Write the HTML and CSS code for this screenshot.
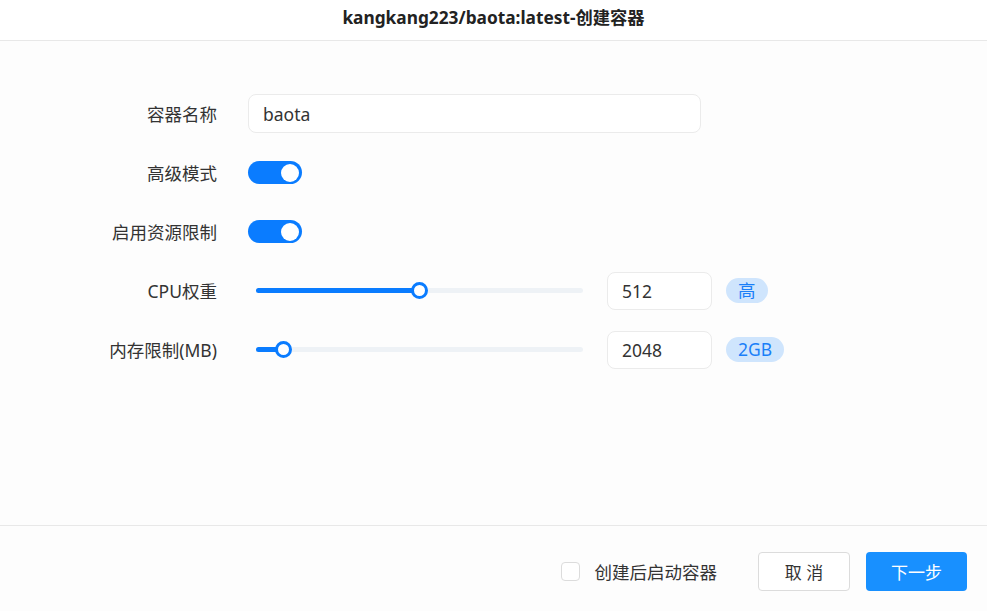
FILE: index.html
```html
<!DOCTYPE html>
<html lang="zh-CN">
<head>
    <meta charset="UTF-8">
    <title>创建容器</title>
    <link rel="stylesheet" href="styles.css">
</head>
<body>
<div class="dialog">
    <div class="dialog-header">kangkang223/baota:latest-创建容器</div>

    <form class="dialog-body">
        <div class="row">
            <label class="row-label">容器名称</label>
            <input type="text" class="text-input name-input" value="baota">
        </div>

        <div class="row">
            <label class="row-label">高级模式</label>
            <span class="switch on"><span class="knob"></span></span>
        </div>

        <div class="row">
            <label class="row-label">启用资源限制</label>
            <span class="switch on"><span class="knob"></span></span>
        </div>

        <div class="row">
            <label class="row-label">CPU权重</label>
            <div class="slider">
                <div class="track">
                    <div class="fill" style="width: 50%"></div>
                    <span class="thumb" style="left: 50%"></span>
                </div>
            </div>
            <input type="text" class="text-input num-input" value="512">
            <span class="tag">高</span>
        </div>

        <div class="row">
            <label class="row-label">内存限制(MB)</label>
            <div class="slider">
                <div class="track">
                    <div class="fill" style="width: 8.3%"></div>
                    <span class="thumb" style="left: 8.3%"></span>
                </div>
            </div>
            <input type="text" class="text-input num-input" value="2048">
            <span class="tag">2GB</span>
        </div>
    </form>

    <div class="dialog-footer">
        <label class="check">
            <span class="check-box"></span>
            创建后启动容器
        </label>
        <button type="button" class="btn btn-default">取 消</button>
        <button type="button" class="btn btn-primary">下一步</button>
    </div>
</div>
</body>
</html>
```

FILE: styles.css
```css
body {
    margin: 0;
    font-family: "Noto Sans", "Noto Sans CJK SC", sans-serif;
    color: #333;
    background: #fff;
}

.dialog {
    height: 611px;
    display: flex;
    flex-direction: column;
    background: #fdfdfd;
}

.dialog-header {
    height: 40px;
    line-height: 36px;
    border-bottom: 1px solid #e8e8e8;
    background: #fff;
    text-align: center;
    font-size: 17.3px;
    font-weight: bold;
    color: #222;
}

.dialog-body {
    flex: 1;
    padding-top: 53px;
    display: flex;
    flex-direction: column;
    gap: 20px;
}

.row {
    height: 39px;
    display: flex;
    align-items: center;
}

.row-label {
    width: 217px;
    margin-right: 31px;
    text-align: right;
    font-size: 17.5px;
    color: #333;
}

.text-input {
    height: 39px;
    box-sizing: border-box;
    border: 1px solid #ebebeb;
    border-radius: 8px;
    background: #fff;
    padding: 0 14px;
    font-family: inherit;
    font-size: 17.5px;
    color: #333;
    outline: none;
}

.name-input {
    width: 453px;
}

.num-input {
    width: 105px;
    height: 38px;
}

.switch {
    width: 54px;
    height: 23px;
    border-radius: 12px;
    background: #c8ccd2;
    position: relative;
}

.switch.on {
    background: #0a7cff;
}

.knob {
    position: absolute;
    top: 2.5px;
    right: 3px;
    width: 18px;
    height: 18px;
    border-radius: 50%;
    background: #fff;
}

.slider {
    width: 327px;
    padding: 0 8px;
    margin-right: 16px;
}

.track {
    height: 5px;
    border-radius: 3px;
    background: #eef2f6;
    position: relative;
}

.fill {
    height: 100%;
    border-radius: 3px;
    background: #0a7cff;
}

.thumb {
    position: absolute;
    top: 50%;
    width: 11px;
    height: 11px;
    margin: -8.5px 0 0 -8.5px;
    border: 3px solid #0a7cff;
    border-radius: 50%;
    background: #fff;
}

.tag {
    margin-left: 14px;
    height: 25px;
    line-height: 25px;
    padding: 0 12px;
    border-radius: 13px;
    background: #cfe5fd;
    color: #1a7ff8;
    font-size: 17.5px;
}

.dialog-footer {
    height: 86px;
    box-sizing: border-box;
    border-top: 1px solid #e8e8e8;
    display: flex;
    align-items: center;
    justify-content: flex-end;
    padding: 5px 20px 0 0;
}

.check {
    display: flex;
    align-items: center;
    font-size: 17.5px;
    color: #333;
    margin-right: 41px;
}

.check-box {
    width: 17px;
    height: 17px;
    border: 1px solid #dcdcdc;
    border-radius: 4px;
    background: #fff;
    margin-right: 15px;
}

.btn {
    height: 39px;
    border-radius: 4px;
    font-family: inherit;
    font-size: 17px;
    cursor: pointer;
}

.btn-default {
    width: 92px;
    border: 1px solid #dcdcdc;
    background: #fff;
    color: #333;
    margin-right: 16px;
}

.btn-primary {
    width: 101px;
    border: none;
    background: #1890ff;
    color: #fff;
}
```
